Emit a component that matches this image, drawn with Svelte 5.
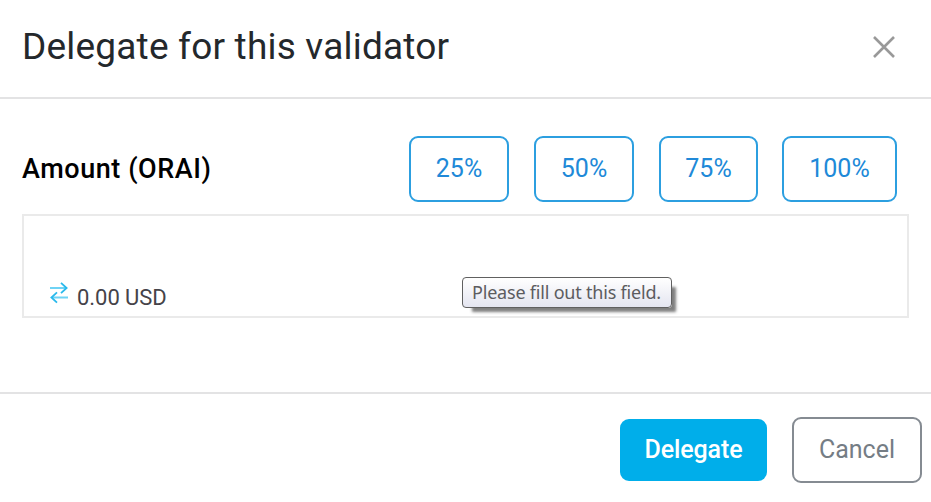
<script>
  const shares = [
    { label: '25%', width: 100 },
    { label: '50%', width: 100 },
    { label: '75%', width: 99 },
    { label: '100%', width: 115 }
  ];
</script>

<div class="dialog">
  <header>
    <h1><span>Delegate for this validator</span></h1>
    <button class="close" aria-label="Close">
      <svg width="22" height="22" viewBox="0 0 22 22"><path d="M1 1 21 21M21 1 1 21" /></svg>
    </button>
  </header>
  <main>
    <div class="row">
      <span class="label">Amount (ORAI)</span>
      <div class="shares">
        {#each shares as share}
          <button class="share" style="width: {share.width}px"><span>{share.label}</span></button>
        {/each}
      </div>
    </div>
    <div class="field">
      <svg class="swap" width="18" height="22" viewBox="0 0 18 22">
        <path class="soft" d="M0 6H16M2 15.5H18" />
        <path d="M11 .8 16.6 6 11 11.2M7 10.3 1.4 15.5 7 20.7" />
      </svg>
      <span class="usd">0.00 USD</span>
      <div class="tip"><span>Please fill out this field.</span></div>
    </div>
  </main>
  <footer>
    <button class="delegate"><span>Delegate</span></button>
    <button class="cancel"><span>Cancel</span></button>
  </footer>
</div>

<style>
  .dialog {
    width: 931px;
    height: 502px;
    box-sizing: border-box;
    display: flex;
    flex-direction: column;
    overflow: hidden;
    background: #fff;
    font-family: Roboto, sans-serif;
    white-space: nowrap;
  }
  .dialog * { box-sizing: border-box; }
  button {
    font: inherit;
    padding: 0;
    margin: 0;
    background: none;
    border: 0;
    display: flex;
    align-items: center;
    justify-content: center;
  }
  header {
    height: 99px;
    border-bottom: 2px solid #e3e3e4;
    display: flex;
    justify-content: space-between;
    align-items: center;
    padding: 0 36px 4px 22px;
  }
  h1 {
    margin: 0;
    font-size: 37px;
    font-weight: 400;
    line-height: 44px;
    letter-spacing: 0.2px;
    color: #24282c;
  }
  .close svg { display: block; fill: none; stroke: #999; stroke-width: 2.6; }
  main {
    height: 295px;
    padding: 37px 22px 0;
    border-bottom: 2px solid #e3e3e4;
  }
  .row {
    height: 66px;
    display: flex;
    justify-content: space-between;
    align-items: center;
    padding-right: 12px;
  }
  .label { font-size: 27px; font-weight: 500; letter-spacing: 0.56px; color: #000; }
  .shares { display: flex; gap: 25px; }
  .share {
    height: 66px;
    border: 2px solid #2c9fe0;
    border-radius: 9px;
    color: #2089d8;
    font-size: 25px;
    padding-bottom: 2px;
  }
  .share:last-child { margin-left: -1px; }
  .field {
    position: relative;
    margin-top: 12px;
    height: 104px;
    border: 2px solid #eaeaea;
    display: flex;
    align-items: flex-end;
    padding: 0 0 5px 26px;
  }
  .swap { fill: none; stroke: #29b9ec; stroke-width: 1.8; margin-bottom: 7px; }
  .swap .soft { stroke: #6fd3f5; stroke-width: 2.2; }
  .usd { margin-left: 9px; font-size: 22px; line-height: 26px; letter-spacing: -0.05px; color: #454349; }
  .tip {
    position: absolute;
    left: 438px;
    top: 61px;
    width: 210px;
    height: 31px;
    border: 1px solid #606060;
    border-radius: 4px;
    background: linear-gradient(#fff, #e4e5f0);
    box-shadow: 7px 7px 3px -3px rgba(0, 0, 0, 0.5);
    font: 18px/29px "Noto Sans", sans-serif;
    letter-spacing: -0.2px;
    color: #5c5c60;
    padding-left: 9px;
  }
  footer {
    display: flex;
    justify-content: flex-end;
    align-items: center;
    gap: 25px;
    height: 108px;
    padding: 3px 9px 0 0;
  }
  footer button { border-radius: 9px; font-size: 25px; }
  .delegate { width: 147px; height: 62px; background: #00aeea; color: #fff; font-weight: 500; letter-spacing: -0.1px; }
  .cancel { width: 130px; height: 66px; border: 2px solid #858b92; color: #757d85; }
</style>
